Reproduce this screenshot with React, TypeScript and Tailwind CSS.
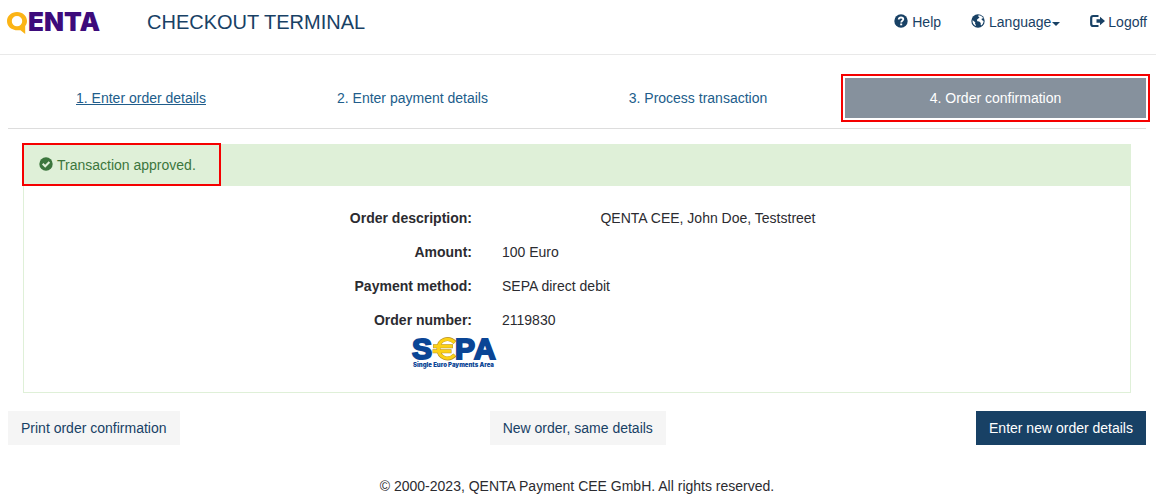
import React from "react";

type IconProps = { className?: string };

function QentaLogo() {
  return (
    <svg
      width="96"
      height="32"
      viewBox="0 0 96 32"
      role="img"
      aria-label="QENTA"
      className="block overflow-visible"
    >
      <path
        fill="#fbb416"
        fillRule="evenodd"
        d="M10 6 C15.800 6 20 10 20 15 C20 17 19.400 18.600 18.200 20 L18.200 28 L13.500 24.200 C5 25.200 0 20.800 0 15 C0 10 4.200 6 10 6 Z M10 10 A5.200 5 0 0 0 4.800 15 A5.200 5 0 0 0 10 20.200 A5.200 5 0 0 0 15.200 15 A5.200 5 0 0 0 10 10 Z"
      />
      <text
        x="21"
        y="25"
        fontFamily="Inter, sans-serif"
        fontSize="26"
        fontWeight="900"
        fill="#3d0b7b"
      >
        ENTA
      </text>
    </svg>
  );
}

function SepaLogo() {
  return (
    <svg
      width="84"
      height="31"
      viewBox="0 0 84 31"
      role="img"
      aria-label="SEPA Single Euro Payments Area"
      className="block overflow-visible"
    >
      <g fontFamily="'Liberation Sans', Arial, sans-serif" fontSize="30" fontWeight="700" fill="#0a4595" stroke="#0a4595" strokeWidth="2">
        <text x="-1" y="22">S</text>
        <text x="42" y="22">P</text>
        <text x="61" y="22">A</text>
      </g>
      <g fill="none">
        <path d="M42 5.500 C35.500 -1 25.500 2.500 25.500 11.700 C25.500 21 35.500 24.500 42 18 M20 9.200 H40 M19.500 14.200 H38.500" stroke="#b9922c" strokeWidth="4" />
        <path d="M41.500 5.500 C35.500 -0.500 25.500 2.500 25.500 11.700 C25.500 21 35.500 24 41.500 18 M20.500 9.200 H39.500 M20 14.200 H38" stroke="#fcd116" strokeWidth="3" />
      </g>
      <text
        x="0"
        y="30"
        fontFamily="Inter, sans-serif"
        fontSize="6"
        fontWeight="900"
        fill="#0a4595"
      >
        Single Euro Payments Area
      </text>
    </svg>
  );
}

function QuestionIcon({ className }: IconProps) {
  return (
    <svg className={className} width="14" height="14" viewBox="0 0 14 14" aria-hidden="true">
      <circle cx="7" cy="7" r="6.700" fill="currentColor" />
      <path d="M4.700 5.500 C4.700 3.900 5.700 3.500 7 3.500 C8.400 3.500 9.300 4.200 9.300 5.300 C9.300 6.800 7.200 6.700 7.200 8.600" fill="none" stroke="#fff" strokeWidth="1.800" />
      <rect x="6.200" y="9.500" width="2" height="1.800" fill="#fff" />
    </svg>
  );
}

function GlobeIcon({ className }: IconProps) {
  return (
    <svg className={className} width="14" height="14" viewBox="0 0 14 14" aria-hidden="true">
      <circle cx="7" cy="7" r="6.700" fill="currentColor" />
      <path
        fill="#fff"
        d="M7.400 1.300 C9.800 1.400 11.700 2.800 12.400 4.800 L11.200 4.300 L10.400 5.200 L11.600 6.600 L12.600 7 C12.500 8.800 11.700 10.400 10.400 11.400 L9.600 10.600 L9.800 9 L8.200 7.600 L6.300 7.200 L5.900 5.800 L7.300 4.600 L8.500 3.400 L7.300 2.500 Z M1.500 6.200 L2.800 7 L4.300 8.400 L4 9.700 L4.900 11 L4.700 12 C2.600 11 1.300 8.900 1.500 6.200 Z"
      />
    </svg>
  );
}

function LogoutIcon({ className }: IconProps) {
  return (
    <svg className={className} width="15" height="14" viewBox="0 0 15 14" aria-hidden="true">
      <path d="M8.500 2 H3.200 Q1.200 2 1.200 4 V10 Q1.200 12 3.200 12 H8.500" fill="none" stroke="currentColor" strokeWidth="2.200" />
      <path d="M6.500 5.300 H10 V2.800 L15 7 L10 11.200 V8.700 H6.500 Z" fill="currentColor" />
    </svg>
  );
}

function OkIcon({ className }: IconProps) {
  return (
    <svg className={className} width="14" height="14" viewBox="0 0 14 14" aria-hidden="true">
      <circle cx="7" cy="7" r="6.700" fill="currentColor" />
      <path d="M3.700 6.800 L6.200 9.300 L10.400 5" fill="none" stroke="#dff0d8" strokeWidth="2" />
    </svg>
  );
}

const details = [
  { label: "Order description:", value: "QENTA CEE, John Doe, Teststreet", centered: true },
  { label: "Amount:", value: "100 Euro" },
  { label: "Payment method:", value: "SEPA direct debit" },
  { label: "Order number:", value: "2119830" },
];

export default function App() {
  return (
    <div className="bg-white font-['Liberation_Sans',Arial,sans-serif] text-sm leading-5 text-[#2b2b30]">
      <header className="flex items-start border-b border-[#e9e9e9] pt-3 pr-[9px] pb-[22px] pl-[7px] text-[#184165]">
        <a href="#home" className="-mt-1.5 block h-6">
          <QentaLogo />
        </a>
        <h1 className="ml-11 text-xl leading-5">CHECKOUT TERMINAL</h1>
        <nav aria-label="Account" className="ml-auto flex gap-[30px]">
          <a href="#help" className="flex">
            <QuestionIcon className="mt-0.5 mr-1" />
            Help
          </a>
          <button type="button" className="flex" aria-haspopup="menu">
            <GlobeIcon className="mt-0.5 mr-1" />
            Language
            <svg className="mt-[10px] ml-px" width="8" height="4" viewBox="0 0 8 4" aria-hidden="true">
              <path d="M0 0 H8 L4 4 Z" fill="currentColor" />
            </svg>
          </button>
          <a href="#logoff" className="flex">
            <LogoutIcon className="mt-0.5 mr-[3px]" />
            Logoff
          </a>
        </nav>
      </header>

      <main className="pr-[10px] pl-2">
        <ol className="mt-[23px] grid grid-cols-[266fr_277fr_294fr_301fr] border-b border-[#ddd] pb-[10px] text-center text-[#215d8b]">
          <li className="py-[10px]">
            <a href="#order" className="underline">1. Enter order details</a>
          </li>
          <li className="py-[10px]">2. Enter payment details</li>
          <li className="py-[10px]">3. Process transaction</li>
          <li
            aria-current="step"
            className="bg-[#86919d] py-[10px] text-white outline-2 outline-offset-2 outline-[#f50000]"
          >
            4. Order confirmation
          </li>
        </ol>

        <section className="mx-[15px] mt-[15px] border border-[#dff0d8]">
          <div className="flex bg-[#dff0d8] pb-0.5 text-[#3c763d]">
            <p
              role="status"
              className="flex pt-[10px] pr-[23px] pb-[9px] pl-[15px] leading-5 outline-2 outline-[#f50000]"
            >
              <OkIcon className="mt-0.5 mr-1" />
              Transaction approved.
            </p>
          </div>
          <div className="pt-[22px] pb-6">
            <dl className="flex flex-col gap-[14px]">
              {details.map((item) => (
                <div key={item.label} className="grid grid-cols-[463fr_442fr_201fr]">
                  <dt className="pr-[15px] text-right font-bold">{item.label}</dt>
                  <dd className={item.centered ? "px-[15px] text-center" : "px-[15px]"}>{item.value}</dd>
                </div>
              ))}
            </dl>
            <div className="mt-[7px] flex justify-center pr-[245px]">
              <SepaLogo />
            </div>
          </div>
        </section>

        <div className="mt-[18px] flex justify-between">
          <button type="button" className="bg-[#f5f5f5] px-[13px] py-[7px] text-[#184165]">
            Print order confirmation
          </button>
          <button type="button" className="bg-[#f5f5f5] px-[13px] py-[7px] text-[#184165]">
            New order, same details
          </button>
          <button type="button" className="bg-[#184165] px-[13px] py-[7px] text-white">
            Enter new order details
          </button>
        </div>
        <footer className="mt-[31px] text-center">
          © 2000-2023, QENTA Payment CEE GmbH. All rights reserved.
        </footer>
      </main>
    </div>
  );
}
